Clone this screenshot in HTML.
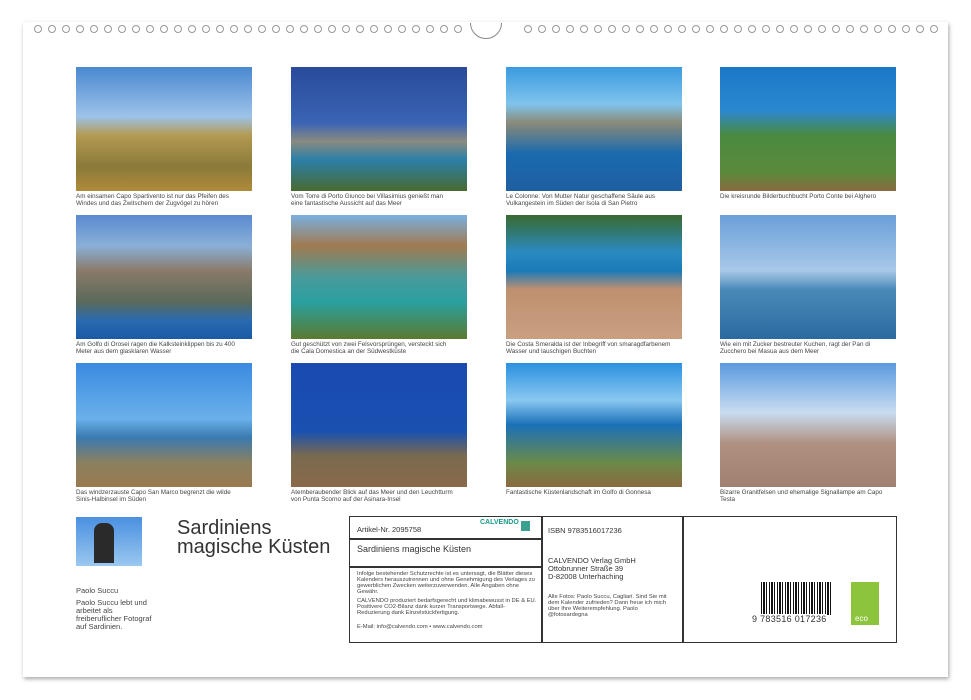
<!DOCTYPE html><html><head><meta charset="utf-8"><style>
body{margin:0;width:971px;height:700px;background:#fff;position:relative;overflow:hidden;font-family:"Liberation Sans",sans-serif;color:#333}
.page{position:absolute;left:23px;top:22px;width:925px;height:655px;background:#fff;box-shadow:1px 2px 4px rgba(0,0,0,.35)}
.hole{position:absolute;top:25px;width:6px;height:6px;border:1px solid #999;border-radius:50%;background:#fff}
.notch{position:absolute;left:470px;top:7px;width:30px;height:30px;border:1.5px solid #888;border-radius:50%;clip-path:inset(50% 0 0 0)}
.ph{position:absolute;width:176px;height:124px}
.cap{position:absolute;width:165px;font-size:6.3px;line-height:7px;color:#444}
.a{position:absolute}
</style></head><body>
<div class="page"></div>
<div id="holes"></div>
<div class="notch"></div>
<script>
var h='';for(var i=0;i<65;i++){var x=34+i*14;if(x>458&&x<512)continue;h+='<div class="hole" style="left:'+x+'px"></div>';}
document.getElementById('holes').innerHTML=h;
</script>
<div class="ph" style="left:76px;top:67px;background:linear-gradient(#4a88d0 0%,#9cc3e8 40%,#b49a52 55%,#8a7a3a 80%,#b08a3a 100%)"></div>
<div class="ph" style="left:291px;top:67px;background:linear-gradient(#2a4a9a 0%,#3a64b4 45%,#8a8a80 60%,#2a7fa8 75%,#4a6a30 100%)"></div>
<div class="ph" style="left:506px;top:67px;background:linear-gradient(#3a9ae0 0%,#80c4ec 30%,#8a8a78 45%,#1a6ab0 70%,#1f5fa0 100%)"></div>
<div class="ph" style="left:720px;top:67px;background:linear-gradient(#1a78c8 0%,#2a88d0 35%,#4a8a40 55%,#5a8a3a 85%,#8a6a40 100%)"></div>
<div class="ph" style="left:76px;top:215px;background:linear-gradient(#5a8ad0 0%,#8ab0d8 25%,#8a7a6a 45%,#5a6a5a 70%,#2a6ab0 85%,#1a5aa8 100%)"></div>
<div class="ph" style="left:291px;top:215px;background:linear-gradient(#7ab0e0 0%,#a07a50 25%,#4a9a9a 50%,#2aa0a0 70%,#5a7a30 100%)"></div>
<div class="ph" style="left:506px;top:215px;background:linear-gradient(#3a6a30 0%,#2a8ac0 30%,#1a7ab8 45%,#c09070 60%,#c8a080 100%)"></div>
<div class="ph" style="left:720px;top:215px;background:linear-gradient(#6aa0d8 0%,#a8c8e8 45%,#4a8ab8 60%,#2a6aa0 100%)"></div>
<div class="ph" style="left:76px;top:363px;background:linear-gradient(#3a8ae0 0%,#6ab0ea 45%,#3a7ab0 60%,#8a8060 80%,#9a7a50 100%)"></div>
<div class="ph" style="left:291px;top:363px;background:linear-gradient(#1a4ab0 0%,#1a50b0 55%,#7a6a50 75%,#8a6a4a 100%)"></div>
<div class="ph" style="left:506px;top:363px;background:linear-gradient(#2a90e0 0%,#8ac8f0 30%,#1a70b8 50%,#6a8a4a 80%,#8a6a40 100%)"></div>
<div class="ph" style="left:720px;top:363px;background:linear-gradient(#5a9ae0 0%,#c8dcf0 40%,#b09080 65%,#a08070 100%)"></div>
<div class="cap" style="left:76px;top:193px">Am einsamen Capo Spartivento ist nur das Pfeifen des Windes und das Zwitschern der Zugvögel zu hören</div>
<div class="cap" style="left:291px;top:193px">Vom Torre di Porto Giunco bei Villasimius genießt man eine fantastische Aussicht auf das Meer</div>
<div class="cap" style="left:506px;top:193px">Le Colonne: Von Mutter Natur geschaffene Säule aus Vulkangestein im Süden der Isola di San Pietro</div>
<div class="cap" style="left:720px;top:193px;width:180px">Die kreisrunde Bilderbuchbucht Porto Conte bei Alghero</div>
<div class="cap" style="left:76px;top:341px">Am Golfo di Orosei ragen die Kalksteinklippen bis zu 400 Meter aus dem glasklaren Wasser</div>
<div class="cap" style="left:291px;top:341px">Gut geschützt von zwei Felsvorsprüngen, versteckt sich die Cala Domestica an der Südwestküste</div>
<div class="cap" style="left:506px;top:341px">Die Costa Smeralda ist der Inbegriff von smaragdfarbenem Wasser und lauschigen Buchten</div>
<div class="cap" style="left:720px;top:341px">Wie ein mit Zucker bestreuter Kuchen, ragt der Pan di Zucchero bei Masua aus dem Meer</div>
<div class="cap" style="left:76px;top:489px">Das windzerzauste Capo San Marco begrenzt die wilde Sinis-Halbinsel im Süden</div>
<div class="cap" style="left:291px;top:489px">Atemberaubender Blick auf das Meer und den Leuchtturm von Punta Scorno auf der Asinara-Insel</div>
<div class="cap" style="left:506px;top:489px">Fantastische Küstenlandschaft im Golfo di Gonnesa</div>
<div class="cap" style="left:720px;top:489px">Bizarre Granitfelsen und ehemalige Signallampe am Capo Testa</div>
<div class="a" style="left:76px;top:517px;width:66px;height:49px;background:linear-gradient(#4a90e0,#9ac8f0)"><div style="position:absolute;left:18px;top:6px;width:20px;height:40px;background:#2a2a2a;border-radius:8px 8px 0 0"></div></div>
<div class="a" style="left:76px;top:587px;font-size:7.5px;line-height:8px;color:#444">Paolo Succu<div style="margin-top:4px;width:80px">Paolo Succu lebt und arbeitet als freiberuflicher Fotograf auf Sardinien.</div></div>
<div class="a" style="left:177px;top:519px;font-size:20px;line-height:19px;color:#333">Sardiniens<br>magische Küsten</div>
<div class="a" style="left:349px;top:516px;width:546px;height:125px;border:1.5px solid #333"></div>
<div class="a" style="left:541px;top:517px;width:1.5px;height:125px;background:#333"></div>
<div class="a" style="left:682px;top:517px;width:1.5px;height:125px;background:#333"></div>
<div class="a" style="left:350px;top:538px;width:191px;height:1.5px;background:#333"></div>
<div class="a" style="left:350px;top:566px;width:191px;height:1.5px;background:#333"></div>
<div class="a" style="left:357px;top:525px;font-size:7.5px">Artikel-Nr. 2095758</div>
<div class="a" style="left:480px;top:519px;font-size:7px;font-weight:bold;color:#1a9a8a">CALVENDO</div>
<div class="a" style="left:521px;top:521px;width:9px;height:10px;background:#3aa090"></div>
<div class="a" style="left:357px;top:544px;font-size:9px">Sardiniens magische Küsten</div>
<div class="a" style="left:357px;top:571px;width:180px;font-size:5.8px;line-height:6px;color:#444">Infolge bestehender Schutzrechte ist es untersagt, die Blätter dieses Kalenders herauszutrennen und ohne Genehmigung des Verlages zu gewerblichen Zwecken weiterzuverwenden. Alle Angaben ohne Gewähr.<div style="margin-top:3px">CALVENDO produziert bedarfsgerecht und klimabewusst in DE &amp; EU. Positivere CO2-Bilanz dank kurzer Transportwege. Abfall-Reduzierung dank Einzelstückfertigung.</div><div style="margin-top:8px">E-Mail: info@calvendo.com • www.calvendo.com</div></div>
<div class="a" style="left:548px;top:526px;font-size:7.5px">ISBN 9783516017236</div>
<div class="a" style="left:548px;top:557px;font-size:7.5px;line-height:8px">CALVENDO Verlag GmbH<br>Ottobrunner Straße 39<br>D-82008 Unterhaching</div>
<div class="a" style="left:548px;top:594px;width:130px;font-size:5.8px;line-height:6px;color:#444">Alle Fotos: Paolo Succu, Cagliari. Sind Sie mit dem Kalender zufrieden? Dann freue ich mich über Ihre Weiterempfehlung. Paolo @fotosardegna</div>
<div class="a" style="left:761px;top:582px;width:70px;height:33px;background:repeating-linear-gradient(90deg,#111 0 1px,#fff 1px 2px,#111 2px 4px,#fff 4px 5px,#111 5px 6px,#fff 6px 8px)"></div>
<div class="a" style="left:752px;top:614px;font-size:9px;letter-spacing:.3px;background:#fff">9 783516 017236</div>
<div class="a" style="left:851px;top:582px;width:28px;height:43px;background:#8cc43c"><div style="position:absolute;bottom:2px;left:4px;color:#fff;font-size:8px">eco</div></div>
</body></html>
